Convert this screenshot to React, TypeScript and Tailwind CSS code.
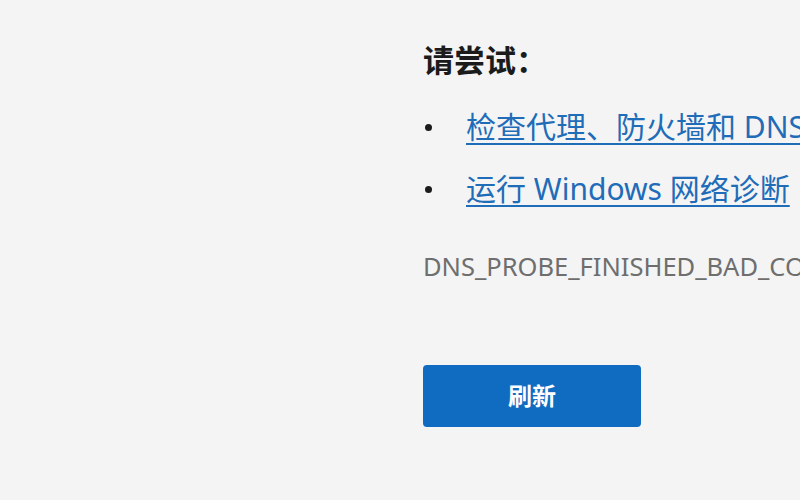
export default function App() {
  const links = ["检查代理、防火墙和 DNS 配置", "运行 Windows 网络诊断"];

  return (
    <div
      className="w-[800px] h-[500px] overflow-hidden bg-[#f4f4f4] pl-[423px] pt-[40px]"
      style={{ fontFamily: '"Noto Sans", "Noto Sans CJK SC", sans-serif' }}
    >
      <h1 className="text-[31px] leading-[40px] font-bold text-[#1b1b1b] whitespace-nowrap">
        请尝试：
      </h1>

      <ul className="mt-[16px]">
        {links.map((text) => (
          <li key={text} className="flex items-center h-[62px] whitespace-nowrap">
            <span className="w-[7px] h-[7px] rounded-full bg-[#1b1b1b] ml-[2px] shrink-0" />
            <a
              href="#"
              className="ml-[34px] text-[30px] leading-[40px] text-[#1f6cb8] underline decoration-2 underline-offset-[5px]"
            >
              {text}
            </a>
          </li>
        ))}
      </ul>

      <p className="mt-[30px] text-[25.5px] leading-[32px] text-[#6e6e6e] whitespace-nowrap">
        DNS_PROBE_FINISHED_BAD_CONFIG
      </p>

      <button className="mt-[83px] w-[218px] h-[62px] rounded-[4px] bg-[#0f6cc0] text-white text-[24px] font-bold">
        刷新
      </button>
    </div>
  );
}
